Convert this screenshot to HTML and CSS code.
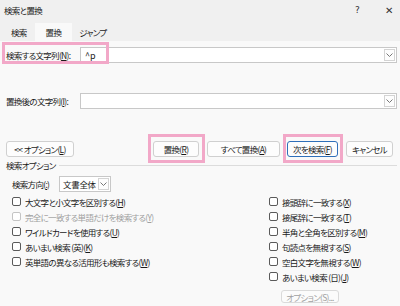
FILE: index.html
```html
<!DOCTYPE html>
<html lang="ja">
<head>
    <meta charset="UTF-8">
    <title>検索と置換</title>
    <link rel="stylesheet" href="styles.css">
</head>
<body>
    <div class="dialog">
        <div class="titlebar">
            <span class="title">検索と置換</span>
            <span class="help">?</span>
            <span class="close">✕</span>
        </div>
        <div class="tabs">
            <span class="tab">検索</span>
            <span class="tab active">置換</span>
            <span class="tab">ジャンプ</span>
        </div>
        <div class="panel">
            <div class="field find">
                <label>検索する文字列(<u>N</u>):</label>
                <div class="combo">
                    <span class="value">^p</span>
                    <span class="arrow"><svg width="7" height="4" viewBox="0 0 7 4"><path d="M0.5 0.5 L3.5 3.5 L6.5 0.5" fill="none" stroke="#777" stroke-width="1"/></svg></span>
                </div>
            </div>
            <div class="field replace">
                <label>置換後の文字列(<u>I</u>):</label>
                <div class="combo">
                    <span class="value"></span>
                    <span class="arrow"><svg width="7" height="4" viewBox="0 0 7 4"><path d="M0.5 0.5 L3.5 3.5 L6.5 0.5" fill="none" stroke="#777" stroke-width="1"/></svg></span>
                </div>
            </div>
            <div class="buttons">
                <button class="btn less">&lt;&lt; オプション(<u>L</u>)</button>
                <button class="btn replace-one">置換(<u>R</u>)</button>
                <button class="btn replace-all">すべて置換(<u>A</u>)</button>
                <button class="btn find-next default">次を検索(<u>F</u>)</button>
                <button class="btn cancel">キャンセル</button>
            </div>
            <div class="group-title">
                <span>検索オプション</span>
                <span class="rule"></span>
            </div>
            <div class="direction">
                <label>検索方向(<u>:</u>)</label>
                <div class="select">
                    <span class="value">文書全体</span>
                    <span class="arrow"><svg width="7" height="4" viewBox="0 0 7 4"><path d="M0.5 0.5 L3.5 3.5 L6.5 0.5" fill="none" stroke="#777" stroke-width="1"/></svg></span>
                </div>
            </div>
            <div class="checks">
                <div class="col left">
                    <div class="check"><span class="box"></span>大文字と小文字を区別する(<u>H</u>)</div>
                    <div class="check disabled"><span class="box"></span>完全に一致する単語だけを検索する(<u>Y</u>)</div>
                    <div class="check"><span class="box"></span>ワイルドカードを使用する(<u>U</u>)</div>
                    <div class="check"><span class="box"></span>あいまい検索 (英)(<u>K</u>)</div>
                    <div class="check"><span class="box"></span>英単語の異なる活用形も検索する(<u>W</u>)</div>
                </div>
                <div class="col right">
                    <div class="check"><span class="box"></span>接頭辞に一致する(<u>X</u>)</div>
                    <div class="check"><span class="box"></span>接尾辞に一致する(<u>T</u>)</div>
                    <div class="check"><span class="box"></span>半角と全角を区別する(<u>M</u>)</div>
                    <div class="check"><span class="box"></span>句読点を無視する(<u>S</u>)</div>
                    <div class="check"><span class="box"></span>空白文字を無視する(<u>W</u>)</div>
                    <div class="check"><span class="box"></span>あいまい検索 (日)(<u>J</u>)</div>
                    <button class="btn more" disabled>オプション(S)...</button>
                </div>
            </div>
        </div>
        <div class="mark mark-find"></div>
        <div class="mark mark-replace"></div>
        <div class="mark mark-next"></div>
    </div>
</body>
</html>
```

FILE: styles.css
```css
body {
    margin: 0;
    background-color: #f0f0f0;
    font-family: "Noto Sans CJK JP", "Noto Sans", sans-serif;
    font-size: 8.5px;
    font-feature-settings: "palt";
    letter-spacing: -0.7px;
    color: #1a1a1a;
}
u {
    text-decoration: underline;
    text-underline-offset: 1px;
}
.dialog {
    position: relative;
    width: 400px;
    height: 306px;
    overflow: hidden;
    display: flex;
    flex-direction: column;
}
.titlebar {
    height: 20px;
    display: flex;
    align-items: center;
    padding-left: 4px;
}
.title {
    flex: 1;
}
.help {
    width: 30px;
    font-size: 9px;
    font-family: "DejaVu Sans", sans-serif;
    color: #333;
}
.close {
    width: 10px;
    margin-right: 5px;
    font-size: 10px;
    font-family: "DejaVu Sans", sans-serif;
    color: #333;
}
.tabs {
    height: 21px;
    display: flex;
    align-items: flex-end;
    padding-left: 4px;
}
.tab {
    height: 18px;
    line-height: 18px;
    padding: 0 7px;
    text-align: center;
}
.tab.active {
    padding: 0 11px;
    margin-left: 1px;
    background-color: #f9f9f9;
}
.panel {
    flex: 1;
    background-color: #f9f9f9;
    padding: 0 3px 0 6px;
}
.field {
    display: flex;
    align-items: center;
    height: 16px;
}
.field.find {
    margin-top: 6px;
}
.field.replace {
    margin-top: 30px;
}
.field label {
    width: 74px;
    white-space: nowrap;
}
.combo, .select {
    flex: 1;
    height: 14px;
    display: flex;
    align-items: center;
    background-color: #fff;
    border: 1px solid #c8c8c8;
}
.combo .value, .select .value {
    flex: 1;
    padding-left: 4px;
    font-size: 9px;
    letter-spacing: 0;
}
.arrow {
    width: 11px;
    height: 12px;
    margin-right: 1px;
    display: flex;
    align-items: center;
    justify-content: center;
    border: 1px solid #d4d4d4;
    background-color: #fdfdfd;
    box-sizing: border-box;
}
.buttons {
    display: flex;
    height: 16px;
    margin-top: 32px;
}
.btn {
    height: 16px;
    padding: 0;
    background-color: #fdfdfd;
    border: 1px solid #d0d0d0;
    border-radius: 3px;
    font-family: inherit;
    font-size: inherit;
    font-feature-settings: inherit;
    letter-spacing: inherit;
    color: #1a1a1a;
}
.btn.less {
    width: 68px;
}
.btn.replace-one {
    width: 46px;
    margin-left: 79px;
}
.btn.replace-all {
    width: 73px;
    margin-left: 8px;
}
.btn.find-next {
    width: 51px;
    margin-left: 7px;
}
.btn.default {
    border-color: #2f6fb9;
}
.btn.cancel {
    width: 47px;
    margin-left: 8px;
}
.group-title {
    display: flex;
    align-items: center;
    height: 14px;
    margin-top: 1px;
}
.group-title .rule {
    flex: 1;
    height: 1px;
    margin-left: 4px;
    background-color: #dcdcdc;
}
.direction {
    display: flex;
    align-items: center;
    height: 16px;
    margin-top: 4px;
    padding-left: 6px;
}
.direction label {
    width: 47px;
}
.select {
    flex: none;
    width: 50px;
}
.select .value {
    padding-left: 3px;
    font-size: 8.5px;
    letter-spacing: -0.3px;
}
.checks {
    display: flex;
    margin-top: 2px;
    padding-left: 6px;
}
.col {
    display: flex;
    flex-direction: column;
}
.col.left {
    width: 257px;
}
.check {
    height: 15px;
    display: flex;
    align-items: center;
    white-space: nowrap;
}
.box {
    width: 7px;
    height: 7px;
    margin-right: 4px;
    border: 1px solid #5a5a5a;
    border-radius: 2px;
    background-color: #fff;
}
.check.disabled {
    color: #a0a0a0;
}
.check.disabled .box {
    border-color: #c4c4c4;
}
.btn.more {
    width: 58px;
    height: 13px;
    margin-top: 6px;
    margin-left: 12px;
    color: #a0a0a0;
    border-color: #dadada;
    background-color: #fbfbfb;
}
.mark {
    position: absolute;
    border: 3px solid #f2a8c8;
    box-sizing: border-box;
}
.mark-find {
    left: 2px;
    top: 42px;
    width: 107px;
    height: 22px;
}
.mark-replace {
    left: 148px;
    top: 134px;
    width: 57px;
    height: 29px;
}
.mark-next {
    left: 283px;
    top: 134px;
    width: 60px;
    height: 29px;
}
```
